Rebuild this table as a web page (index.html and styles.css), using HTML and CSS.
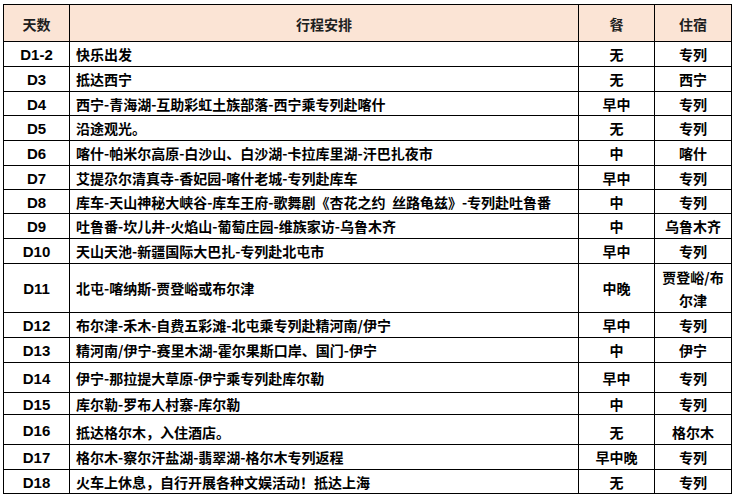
FILE: index.html
```html
<!DOCTYPE html>
<html lang="zh">
<head>
<meta charset="utf-8">
<link rel="stylesheet" href="styles.css">
</head>
<body>
<div class="sheet">
  <div class="c hd">天数</div><div class="c hd">行程安排</div><div class="c hd">餐</div><div class="c hd">住宿</div>
  <div class="c day">D1-2</div><div class="c txt">快乐出发</div><div class="c">无</div><div class="c">专列</div>
  <div class="c day">D3</div><div class="c txt">抵达西宁</div><div class="c">无</div><div class="c">西宁</div>
  <div class="c day">D4</div><div class="c txt">西宁-青海湖-互助彩虹土族部落-西宁乘专列赴喀什</div><div class="c">早中</div><div class="c">专列</div>
  <div class="c day">D5</div><div class="c txt">沿途观光。</div><div class="c">无</div><div class="c">专列</div>
  <div class="c day">D6</div><div class="c txt">喀什-帕米尔高原-白沙山、白沙湖-卡拉库里湖-汗巴扎夜市</div><div class="c">中</div><div class="c">喀什</div>
  <div class="c day">D7</div><div class="c txt">艾提尕尔清真寺-香妃园-喀什老城-专列赴库车</div><div class="c">早中</div><div class="c">专列</div>
  <div class="c day">D8</div><div class="c txt">库车-天山神秘大峡谷-库车王府-歌舞剧《杏花之约&nbsp;&nbsp;丝路龟兹》-专列赴吐鲁番</div><div class="c">中</div><div class="c">专列</div>
  <div class="c day">D9</div><div class="c txt">吐鲁番-坎儿井-火焰山-葡萄庄园-维族家访-乌鲁木齐</div><div class="c">中</div><div class="c">乌鲁木齐</div>
  <div class="c day">D10</div><div class="c txt">天山天池-新疆国际大巴扎-专列赴北屯市</div><div class="c">早中</div><div class="c">专列</div>
  <div class="c day">D11</div><div class="c txt">北屯-喀纳斯-贾登峪或布尔津</div><div class="c">中晚</div><div class="c wrap">贾登峪/布尔津</div>
  <div class="c day">D12</div><div class="c txt">布尔津-禾木-自费五彩滩-北屯乘专列赴精河南/伊宁</div><div class="c">早中</div><div class="c">专列</div>
  <div class="c day">D13</div><div class="c txt">精河南/伊宁-赛里木湖-霍尔果斯口岸、国门-伊宁</div><div class="c">中</div><div class="c">伊宁</div>
  <div class="c day">D14</div><div class="c txt">伊宁-那拉提大草原-伊宁乘专列赴库尔勒</div><div class="c">早中</div><div class="c">专列</div>
  <div class="c day">D15</div><div class="c txt">库尔勒-罗布人村寨-库尔勒</div><div class="c">中</div><div class="c">专列</div>
  <div class="c day">D16</div><div class="c txt low">抵达格尔木，入住酒店。</div><div class="c low">无</div><div class="c low">格尔木</div>
  <div class="c day">D17</div><div class="c txt">格尔木-察尔汗盐湖-翡翠湖-格尔木专列返程</div><div class="c">早中晚</div><div class="c">专列</div>
  <div class="c day">D18</div><div class="c txt">火车上休息，自行开展各种文娱活动！抵达上海</div><div class="c">无</div><div class="c">专列</div>
</div>
</body>
</html>
```
FILE: styles.css
```css
html, body {
  margin: 0;
  background: #ffffff;
}
body {
  padding: 4px 0 0 3px;
  font-family: "Noto Sans CJK SC", "Noto Sans", sans-serif;
  font-size: 14px;
  font-weight: 700;
  color: #000;
}
.sheet {
  display: grid;
  width: 729px;
  box-sizing: border-box;
  grid-template-columns: 65px 508px 75px 76px;
  grid-template-rows: 36px 24px 24px 23px 24px 24px 23px 23px 24px 24px 48px 24px 24px 29px 21px 29px 24px 23px;
  gap: 1px;
  padding: 1px;
  background: #000;
}
.c {
  background: #fff;
  display: flex;
  align-items: center;
  justify-content: center;
  text-align: center;
  line-height: 23px;
  white-space: nowrap;
  padding-top: 1px;
  box-sizing: border-box;
}
.hd {
  background: #fbe4d5;
  color: #1e1e1e;
  padding-top: 2px;
}
.day {
  font-family: "Liberation Sans", "Noto Sans CJK SC", sans-serif;
  font-size: 15px;
}
.txt {
  justify-content: flex-start;
  text-align: left;
  padding-left: 6px;
}
.wrap {
  white-space: normal;
  padding: 1px 4px 0;
}
.low {
  padding-top: 5px;
}
```
